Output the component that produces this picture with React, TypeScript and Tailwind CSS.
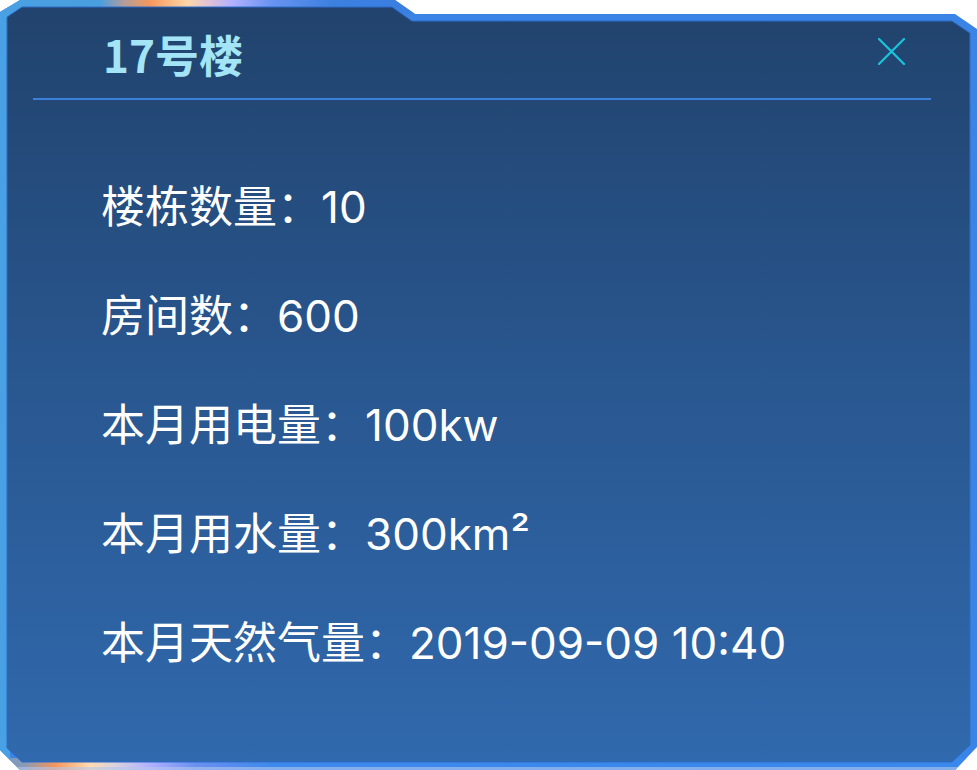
const rows = [
  { label: '楼栋数量：', value: '10' },
  { label: '房间数：', value: '600' },
  { label: '本月用电量：', value: '100kw' },
  { label: '本月用水量：', value: '300km²' },
  { label: '本月天然气量：', value: '2019-09-09 10:40' },
];

const OUTER = '0,12 20,0 395,0 415,14 955,14 977,29 977,747 955,770 20,770 0,750';
const INNER = '7,17 22,7 392,7 412,21 952,21 970,33 970,745 952,762 22,762 7,748';

function Frame() {
  return (
    <svg
      className="absolute inset-0 w-full h-full"
      viewBox="0 0 977 770"
      preserveAspectRatio="none"
    >
      <defs>
        <clipPath id="outerClip">
          <polygon points={OUTER} />
        </clipPath>
        <linearGradient id="topEdge" gradientUnits="userSpaceOnUse" x1="0" y1="0" x2="416" y2="0">
          <stop offset="0" stopColor="#49a0e2" />
          <stop offset="0.24" stopColor="#4a9ee0" />
          <stop offset="0.3" stopColor="#b69c98" />
          <stop offset="0.36" stopColor="#f7985c" />
          <stop offset="0.45" stopColor="#fdd6a8" />
          <stop offset="0.5" stopColor="#e2c2d6" />
          <stop offset="0.56" stopColor="#b0b0ff" />
          <stop offset="0.65" stopColor="#6b93f0" />
          <stop offset="0.8" stopColor="#3c80e0" />
          <stop offset="1" stopColor="#3a7ee0" />
        </linearGradient>
        <linearGradient id="bottomEdge" gradientUnits="userSpaceOnUse" x1="0" y1="0" x2="977" y2="0">
          <stop offset="0" stopColor="#6f9cc8" />
          <stop offset="0.025" stopColor="#8a9ab4" />
          <stop offset="0.056" stopColor="#f5955a" />
          <stop offset="0.092" stopColor="#fddcb0" />
          <stop offset="0.12" stopColor="#d8d0e2" />
          <stop offset="0.154" stopColor="#b0b0ff" />
          <stop offset="0.2" stopColor="#6a90f0" />
          <stop offset="0.28" stopColor="#3d89ec" />
          <stop offset="1" stopColor="#3a88ec" />
        </linearGradient>
        <linearGradient id="fill" x1="0" y1="0" x2="0" y2="1">
          <stop offset="0" stopColor="#21436d" />
          <stop offset="0.5" stopColor="#295790" />
          <stop offset="1" stopColor="#3069ad" />
        </linearGradient>
      </defs>
      <g clipPath="url(#outerClip)">
        <rect x="0" y="0" width="977" height="770" fill="#3a84e6" />
        <rect x="0" y="0" width="10" height="770" fill="#49a0e2" />
        <rect x="0" y="0" width="416" height="14" fill="url(#topEdge)" />
        <rect x="0" y="758" width="977" height="12" fill="url(#bottomEdge)" />
        <rect x="0" y="767" width="977" height="3" fill="#b6c6ec" opacity="0.6" />
      </g>
      <polygon points={INNER} fill="url(#fill)" stroke="#2c6cc8" strokeWidth="1" />
    </svg>
  );
}

export default function App() {
  return (
    <div className="bg-white w-[977px] h-[770px]">
      <div className="relative w-[977px] h-[770px]">
        <Frame />
        <div
          className="relative ml-[33px] w-[898px]"
          style={{ fontFamily: "Inter, 'Noto Sans CJK SC', sans-serif" }}
        >
          <div className="flex justify-between h-[98px]">
            <h2
              className="pl-[70px] pt-[32px] text-[44px] leading-none font-bold text-[#a3e5f6]"
              style={{ fontFamily: "'Noto Sans CJK SC', sans-serif" }}
            >
              17号楼
            </h2>
            <button className="mt-[38px] mr-[26px] h-[27px] w-[27px] text-[#19c5da]">
              <svg viewBox="0 0 27 27" className="w-[27px] h-[27px]">
                <path d="M1 1L26 26M26 1L1 26" stroke="currentColor" strokeWidth="2.2" strokeLinecap="round" />
              </svg>
            </button>
          </div>
          <div className="h-[2px] bg-[#3d80da]" />
          <div className="mt-[77px] pl-[68px] flex flex-col gap-[49px] text-white text-[44px] leading-[60px]">
            {rows.map((row) => (
              <div key={row.label} className="whitespace-nowrap">
                {row.label}
                {row.value}
              </div>
            ))}
          </div>
        </div>
      </div>
    </div>
  );
}
